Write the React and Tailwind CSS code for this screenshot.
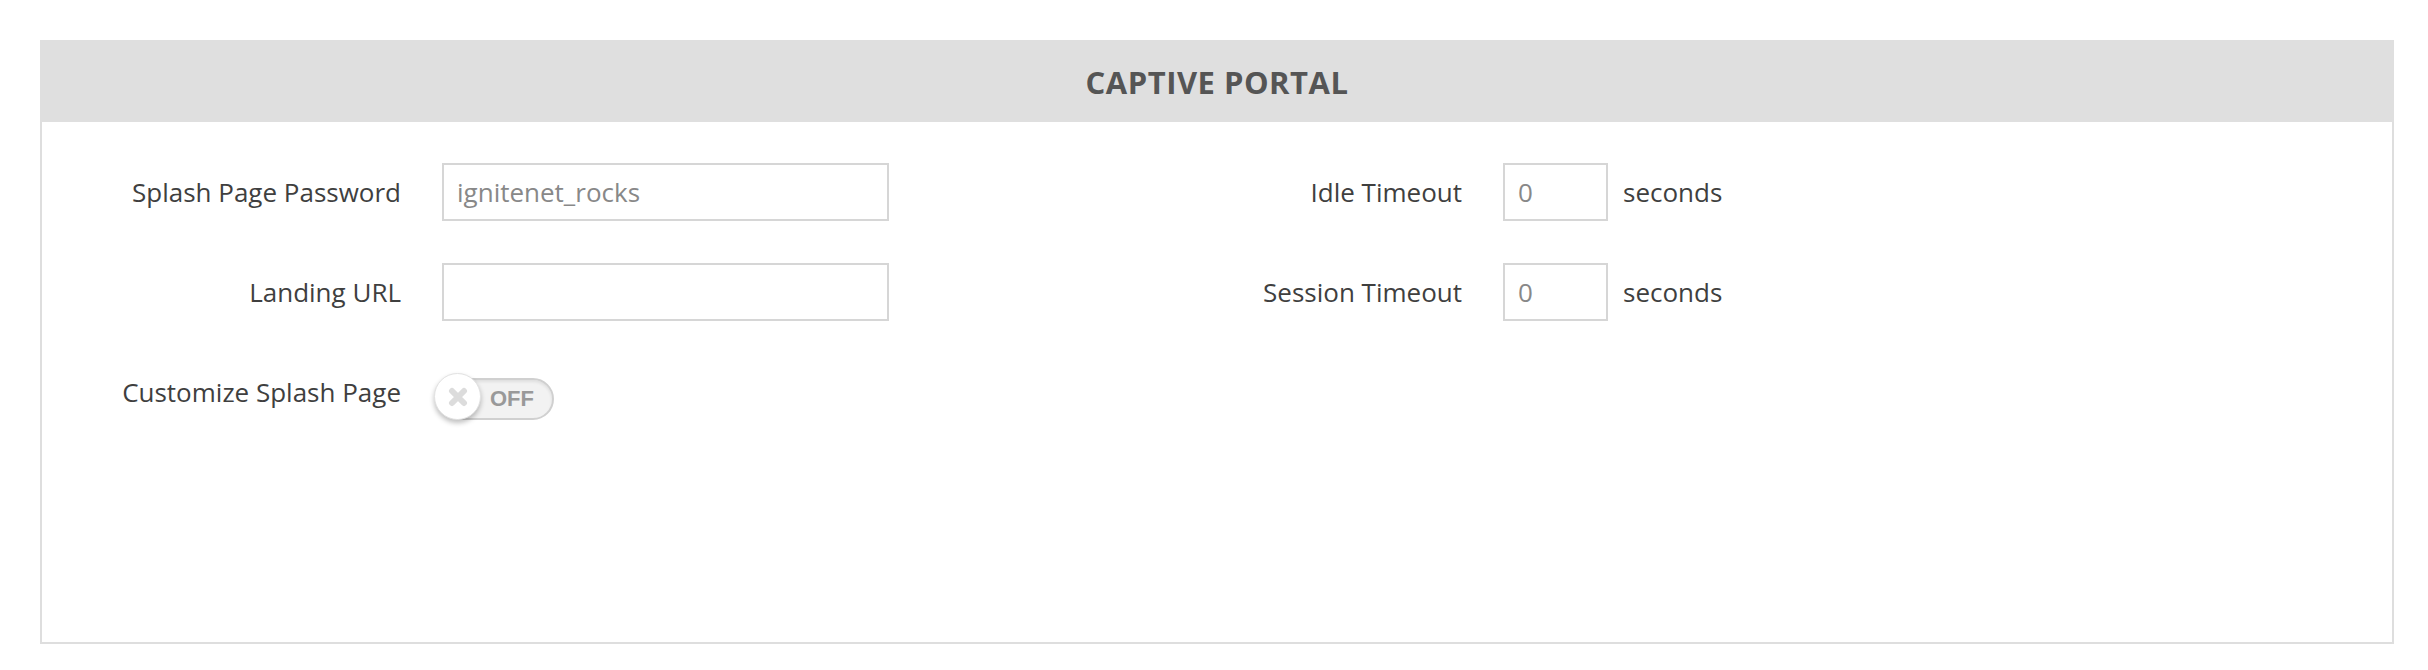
import React from "react";

const font = { fontFamily: '"Open Sans", "Noto Sans", sans-serif' };

const Field = ({ label, labelWidth, children }) => (
  <div className="flex items-center h-[58px]">
    <label
      className="text-right text-[26px] text-[#3f3f3f] shrink-0"
      style={{ width: labelWidth }}
    >
      {label}
    </label>
    <div className="ml-[41px] flex items-center">{children}</div>
  </div>
);

const TextBox = ({ value, width }) => (
  <input
    type="text"
    defaultValue={value}
    className="h-[58px] border-2 border-[#d6d6d6] bg-white px-[13px] text-[26px] text-[#888] outline-none"
    style={{ width }}
  />
);

const Toggle = () => (
  <div className="relative mt-[12px] h-[44px] w-[120px]">
    <div className="absolute left-[4px] top-[2px] h-[42px] w-[116px] rounded-full border-2 border-[#d0d0d0] bg-[#f2f2f2] shadow-[inset_0_2px_3px_rgba(0,0,0,0.08)]">
      <span
        className="absolute left-[50px] top-[5px] text-[22px] font-bold leading-[28px] text-[#999]"
        style={{ fontFamily: '"Liberation Sans", Arial, sans-serif' }}
      >
        OFF
      </span>
    </div>
    <div className="absolute left-0 top-[-3px] flex h-[47px] w-[47px] items-center justify-center rounded-full border border-[#e2e2e2] bg-white shadow-[0_3px_5px_rgba(0,0,0,0.25)]">
      <svg width="20" height="20" viewBox="0 0 20 20">
        <path
          d="M4 4 L16 16 M16 4 L4 16"
          stroke="#dcdcdc"
          strokeWidth="6"
          strokeLinecap="round"
        />
      </svg>
    </div>
  </div>
);

export default function App() {
  return (
    <div className="min-h-[670px] bg-white p-[40px] pr-[34px]" style={font}>
      <div className="h-[604px] border-2 border-t-0 border-[#dedede] bg-white">
        <div className="-mx-[2px] flex h-[82px] items-center justify-center bg-[#dfdfdf]">
          <h2 className="mt-[2px] text-[31px] font-bold tracking-[0.5px] text-[#555]">
            CAPTIVE PORTAL
          </h2>
        </div>
        <div className="flex pt-[41px]">
          <div className="flex w-[1177px] flex-col gap-[42px]">
            <Field label="Splash Page Password" labelWidth="359px">
              <TextBox value="ignitenet_rocks" width="447px" />
            </Field>
            <Field label="Landing URL" labelWidth="359px">
              <TextBox value="" width="447px" />
            </Field>
            <Field label="Customize Splash Page" labelWidth="359px">
              <div className="-ml-[8px] self-start">
                <Toggle />
              </div>
            </Field>
          </div>
          <div className="flex flex-col gap-[42px]">
            <Field label="Idle Timeout" labelWidth="243px">
              <TextBox value="0" width="105px" />
              <span className="ml-[15px] text-[26px] text-[#3f3f3f]">seconds</span>
            </Field>
            <Field label="Session Timeout" labelWidth="243px">
              <TextBox value="0" width="105px" />
              <span className="ml-[15px] text-[26px] text-[#3f3f3f]">seconds</span>
            </Field>
          </div>
        </div>
      </div>
    </div>
  );
}
